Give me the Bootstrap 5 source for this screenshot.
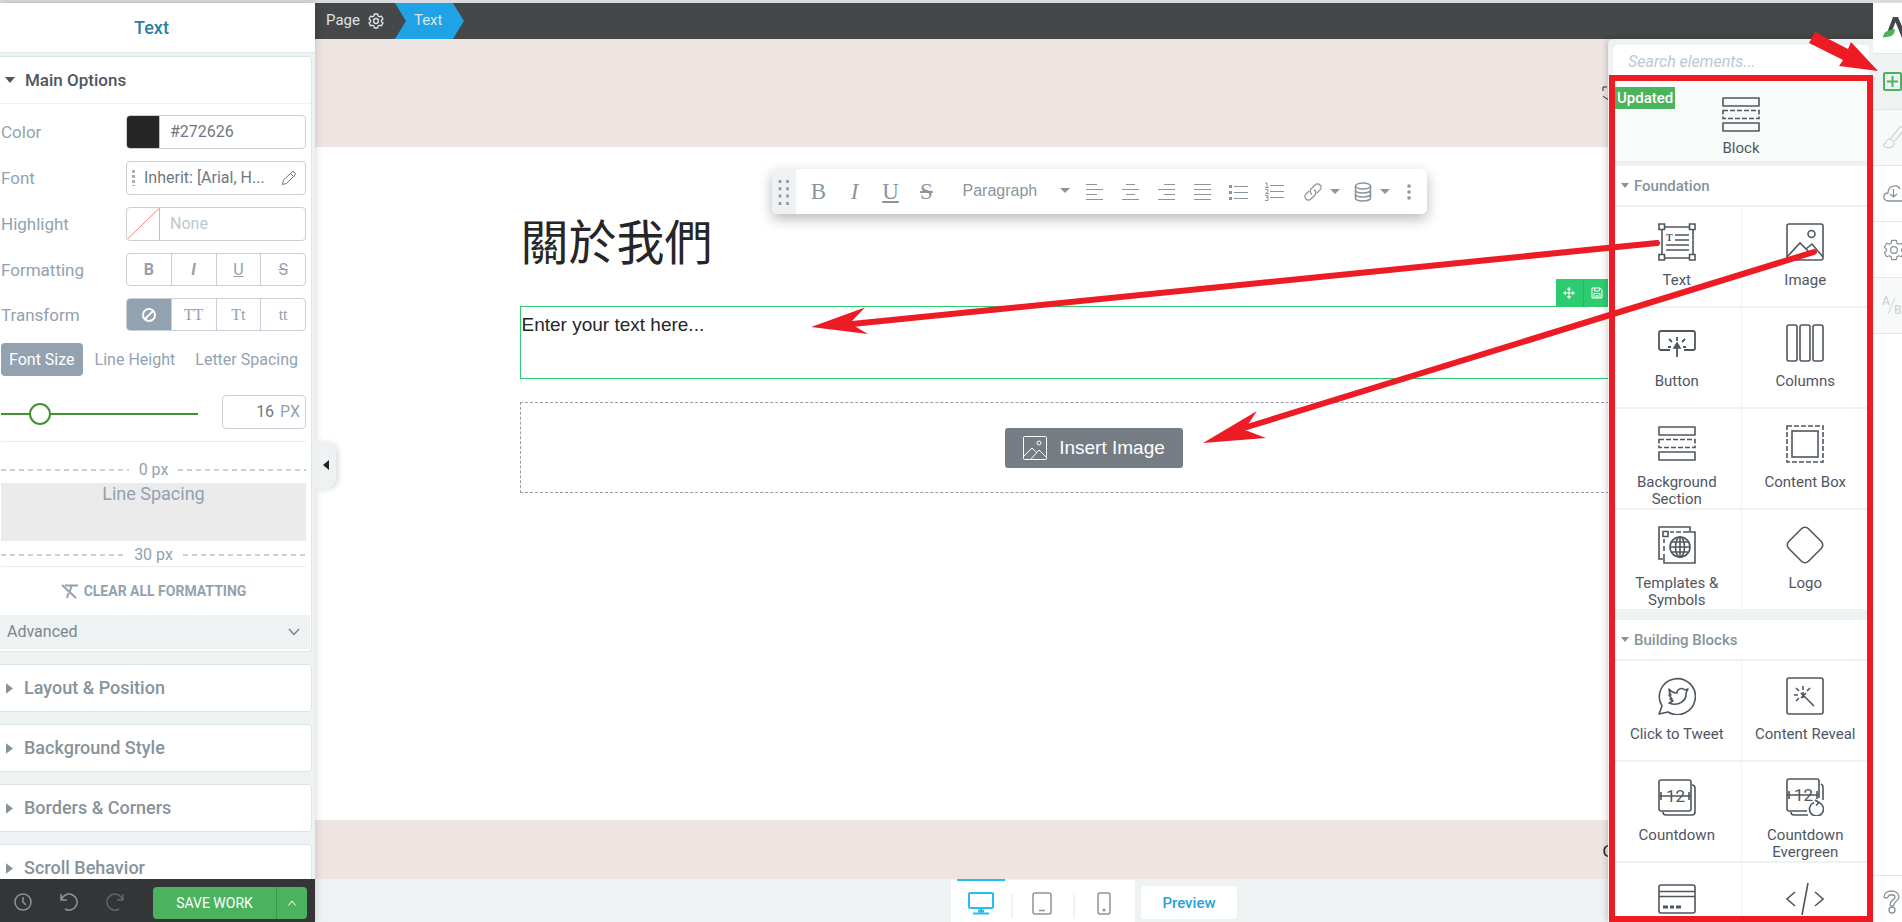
<!DOCTYPE html>
<html lang="en">
<head>
<meta charset="utf-8">
<meta name="viewport" content="width=device-width, initial-scale=1">
<title>Page editor</title>
<link rel="stylesheet" href="https://cdn.jsdelivr.net/npm/bootstrap@5.3.0/dist/css/bootstrap.min.css">
<script src="https://cdn.jsdelivr.net/npm/bootstrap@5.3.0/dist/js/bootstrap.bundle.min.js"></script>
<style>
  :root { --ui: Roboto, "Noto Sans", sans-serif; --grey: #92a2b0; --line: #dce6e8; --bg: #eef2f3; --ink: #50565f; --green: #4bb35e; }
  body { font: 400 17px/20px var(--ui); color: var(--grey); background: #fff; }
  svg { display: block; fill: none; stroke: currentColor; flex-shrink: 0; }
  button, a { color: inherit; text-decoration: none; }
  button { background: none; border: 0; padding: 0; }
  .app { border-top: 3px solid #dadce0; }

  .sidebar { width: 315px; background: var(--bg); box-shadow: 0 0 8px rgba(0,0,0,.18); z-index: 2; }
  .side-title { height: 50px; line-height: 50px; background: #fff; border-bottom: 1px solid var(--line); color: #2a7fa9; font-size: 18px; font-weight: 500; padding-right: 12px; }
  .side-body { padding: 3px 3px 0 0; gap: 12px; }
  .panel-box { background: #fff; border: 1px solid var(--line); border-left: 0; border-radius: 0 4px 4px 0; }
  .fold { height: 46px; width: 100%; gap: 11px; padding-left: 6px; font-size: 18px; font-weight: 500; color: #87939b; text-align: left; }
  .fold svg { width: 7px; height: 11px; fill: currentColor; stroke: none; }
  .fold.open { height: 47px; font-size: 17px; color: var(--ink); border-bottom: 1px solid #eef1f2; gap: 10px; padding-left: 5px; }
  .fold.open svg { width: 10px; height: 6px; }
  .options { padding: 11px 5px 0 1px; }
  .opt { margin-bottom: 12px; }
  .opt > label, .opt > .lbl { width: 125px; }
  .ctl { width: 180px; height: 34px; border: 1px solid #c9d0d7; border-radius: 4px; overflow: hidden; color: #6f7882; }
  .ctl input { border: 0; outline: 0; min-width: 0; width: 100%; padding: 0 0 0 10px; color: #6f7882; background: none; font-size: 16px; }
  .ctl input::placeholder { color: #b9c8d2; }
  .ctl.font-pick { font-size: 16px; }
  .swatch { width: 33px; border-right: 1px solid #b7c0c8; }
  .seg { width: 180px; height: 33px; border: 1px solid #c9d0d7; border-radius: 4px; overflow: hidden; }
  .seg button { flex: 1 1 0; border-right: 1px solid #c9d0d7; font-size: 16px; display: grid; place-items: center; }
  .seg button:last-child { border-right: 0; }
  .seg .on { background: var(--grey); color: #fff; }
  .slab { font-family: "Liberation Serif", serif; }
  .tabs button { height: 33px; border-radius: 4px; font-size: 16px; padding: 0 8px; }
  .tabs .on { background: var(--grey); color: #fff; }
  .size-row { margin: 19px 0 12px; }
  .size-row input[type=range] { width: 197px; height: 22px; margin-top: 4px; appearance: none; background: linear-gradient(#45902f,#45902f) center/100% 2px no-repeat; }
  .size-row input[type=range]::-webkit-slider-thumb { appearance: none; width: 22px; height: 22px; border: 2px solid #45902f; border-radius: 50%; background: #fff; }
  .px-box { width: 84px; padding-right: 5px; color: var(--grey); font-size: 16px; }
  .px-box input { text-align: right; padding: 0 6px 0 0; }
  .rule { border-top: 1px solid #e9eeef; }
  .dash { gap: 10px; line-height: 20px; font-size: 16px; padding: 4px 0 1px; }
  .dash.above { padding: 18px 0 3px; }
  .dash::before, .dash::after { content: ""; flex: 1; height: 2px; background: repeating-linear-gradient(90deg, #cbd0d3 0 5px, transparent 5px 9px); }
  .gap-box { height: 58px; background: #ebebeb; font-size: 18px; line-height: 22px; }
  .clear { height: 48px; font-size: 14px; font-weight: 700; gap: 6px; }
  .adv { width: 310px; height: 34px; background: var(--bg); color: #7b868e; margin-bottom: 2px; padding: 0 10px 0 7px; font-size: 16px; }
  .side-foot { height: 43px; background: #343537; color: #8b959b; padding: 6px 8px 3px 14px; gap: 28px; }
  .save { width: 154px; height: 32px; margin-top: 2px; background: var(--green); color: #fff; border-radius: 4px; font-size: 14px; font-weight: 700; overflow: hidden; }
  .save button + button { width: 31px; border-left: 1px solid #3f9a4f; display: grid; place-items: center; }

  .crumbs { height: 36px; background: #464749; color: #dfe3e5; font-size: 15px; line-height: 34px; }
  .crumbs .here { width: 69px; height: 36px; background: #1fa3e6; clip-path: polygon(0 0, 84% 0, 100% 50%, 84% 100%, 0 100%, 16% 50%); padding-left: 19px; }
  .crumbs .root { padding: 0 11px 0 11px; gap: 8px; }
  .canvas { min-height: 0; color: #272626; font-family: "Liberation Sans", "Noto Sans CJK TC", sans-serif; }
  .band { background: #eee5e2; }
  .band.top { height: 108px; }
  .band.foot { height: 59px; }
  .site { width: 100%; max-width: 1149px; margin: 0 auto; }
  .site h1 { font: 400 48px/60px "Noto Sans CJK TC", sans-serif; padding: 62px 0 0 1px; margin: 0 0 37px; }
  .text-el { height: 73px; border: 1px solid #2ecc71; font-size: 19px; line-height: 24px; padding: 6px 1px; }
  .text-el .tools { top: -28px; right: 0; background: #2ecc71; color: #fff; }
  .tools button { width: 28px; height: 28px; display: grid; place-items: center; border-right: 1px solid #27b463; }
  .drop-zone { margin-top: 23px; height: 91px; border: 1px dashed #949ca4; }
  .drop-zone button { width: 178px; height: 40px; background: #757c84; color: #fff; border-radius: 3px; font-size: 19px; gap: 12px; }

  .toolbar { top: 22px; left: 252px; height: 45px; background: #fff; border-radius: 5px; box-shadow: 0 5px 14px rgba(0,0,0,.28); color: #8b959d; z-index: 1; }
  .toolbar .grip { width: 24px; height: 45px; background: var(--bg); border-radius: 5px 0 0 5px; margin-right: 5px; display: grid; place-items: center; }
  .toolbar button { width: 36px; height: 45px; display: grid; place-items: center; font: 23px/24px "Liberation Serif", serif; }
  .toolbar .split { width: 32px; }
  .toolbar .arrow { width: 12px; margin-right: 6px; }
  .toolbar .style-pick { width: 132px; padding: 0 7px 2px 18px; }
  .toolbar select { appearance: none; border: 0; background: none; color: inherit; font-size: 16px; width: 90px; padding: 0; outline: 0; }

  .device-bar { height: 43px; background: var(--bg); gap: 6px; }
  .devices { width: 184px; height: 42px; background: #fff; padding-left: 6px; margin-top: 1px; color: #8b959b; }
  .devices button { flex: 1 1 0; display: grid; place-items: center; height: 43px; padding-top: 4px; position: relative; }
  .devices button + button::before { content: ""; position: absolute; left: 0; top: 14px; height: 24px; border-left: 2px solid #f0f3f4; }
  .devices .on { margin: -1px 6px 0 0; flex: 0 0 48px; border-top: 2px solid #27bdee; color: #27bdee; }
  .preview { width: 96px; height: 33px; margin-top: 7px; background: #fff; border-radius: 4px; color: #2a9fdc; font-size: 15px; font-weight: 500; }

  .elements { top: 36px; bottom: 0; right: 0; width: 265px; padding: 6px 4px 0 5px; background: var(--bg); box-shadow: -1px 0 6px rgba(0,0,0,.2); border-radius: 5px 0 0 0; font-size: 15px; color: var(--ink); z-index: 2; }
  .elements input { height: 37px; width: 100%; border: 0; border-radius: 5px 5px 0 0; background: #fff; font-size: 16px; padding: 0 15px 5px; outline: 0; }
  .elements input::placeholder { color: #bcc8cf; font-style: italic; }
  .tile { min-height: 99px; width: 100%; background: #fff; padding-top: 16px; display: flex; flex-direction: column; align-items: center; gap: 11px; line-height: 17px; }
  .tile svg { width: 38px; height: 38px; stroke-width: 1.6; }
  .tile.block { min-height: 80px; background: #f9fbfb; padding-top: 14px; gap: 6px; border-bottom: 1px solid #e4eaeb; margin-bottom: 4px; }
  .flag { top: 5px; left: 2px; background: var(--green); color: #fff; padding: 0 2px; line-height: 22px; width: 60px; font-weight: 500; }
  .group { height: 39px; width: 100%; background: #fff; margin-bottom: 2px; padding-left: 8px; gap: 5px; color: #87939b; font-weight: 500; }
  .group svg { width: 8px; height: 5px; fill: currentColor; stroke: none; }
  .toolbar .caret { width: 10px; height: 5px; fill: currentColor; stroke: none; }
  .tiles { display: grid; grid-template-columns: 1fr 1fr; gap: 2px 1px; margin-bottom: 11px; }
  .tile text { font: 400 17px Roboto, sans-serif; fill: currentColor; stroke: none; }
  .tile .serif-t { font: bold 10px "Liberation Serif", serif; }

  .rail { width: 29px; overflow: hidden; color: #87939b; }
  .rail button { height: 56px; width: 29px; padding-left: 10px; border-bottom: 1px solid #e0e7e9; display: flex; align-items: center; }
  .rail .brand { height: 51px; }
  .rail .on { background: var(--bg); color: var(--green); }
  .rail .dim { color: #d0d6d9; background: #f8faf9; }
  .rail .ab { font-size: 12px; line-height: 14px; font-weight: 500; padding-left: 9px; }
  .rail .help { border-bottom: 0; border-top: 1px solid #e0e7e9; height: 47px; padding-top: 6px; }
  .marks { left: 0; top: 0; width: 100%; height: 100%; pointer-events: none; z-index: 5; fill: #ed1c24; stroke: #ed1c24; }
  .handle { width: 21px; height: 48px; left: 315px; top: 441px; background: var(--bg); border-radius: 0 12px 12px 0; box-shadow: 3px 1px 5px rgba(0,0,0,.12); z-index: 3; color: #222; display: grid; place-items: center; }
  .solid { fill: currentColor; stroke: none; }
</style>
</head>
<body class="vh-100 overflow-hidden position-relative">
<svg width="0" height="0" class="position-absolute">
  <symbol id="right" viewBox="0 0 8 12"><path d="M0 0v12l8-6z"/></symbol>
  <symbol id="down" viewBox="0 0 12 8" preserveAspectRatio="none"><path d="M0 0h12L6 8z"/></symbol>
  <symbol id="rows" viewBox="0 0 38 38"><path d="M1 2h36v8H1zM1 27h36v8H1z" stroke-linejoin="round"/><rect x="1" y="14.5" width="36" height="8" stroke-dasharray="5 2"/></symbol>
  <symbol id="gear" viewBox="0 0 24 24"><circle cx="12" cy="12" r="3.7"/><path d="M9.500 1.500h5l.6 3 2 1.200 2.900-1 2.500 4.300-2.300 2v2l2.300 2-2.500 4.300-2.900-1-2 1.200-.6 3h-5l-.6-3-2-1.200-2.900 1L1.500 15l2.300-2v-2L1.500 9 4 4.700l2.900 1 2-1.200z" stroke-linejoin="round"/></symbol>
</svg>

<div class="app d-flex h-100">
  <aside class="sidebar d-flex flex-column flex-shrink-0">
    <div class="side-title text-center flex-shrink-0">Text</div>
    <div class="side-body d-flex flex-column flex-grow-1 overflow-hidden">
      <section class="panel-box flex-shrink-0">
        <button class="fold open d-flex align-items-center"><svg><use href="#down"/></svg>Main Options</button>
        <div class="options">
          <div class="opt d-flex align-items-center"><label for="color">Color</label>
            <div class="ctl d-flex"><span class="swatch flex-shrink-0" style="background:#272626"></span><input id="color" value="#272626"></div></div>
          <div class="opt d-flex align-items-center"><span class="lbl">Font</span>
            <button class="ctl font-pick d-flex align-items-center px-1">
              <svg width="5" height="18" class="me-2"><path d="M2.500 1v16" stroke="#a8b2ba" stroke-width="3" stroke-dasharray="3 2"/></svg>Inherit: [Arial, H...
              <svg width="16" height="16" viewBox="0 0 16 16" class="ms-auto me-1"><path d="M1.500 14.500l1-4.500 8.500-8q1-1 2 0l1 1q1 1 0 2l-8.500 8.500zM9.500 3.500l3 3"/></svg></button></div>
          <div class="opt d-flex align-items-center"><label for="hl">Highlight</label>
            <div class="ctl d-flex"><svg class="swatch" height="32" viewBox="0 0 33 32"><path d="M1 31L33 0" stroke="#f28080"/></svg><input id="hl" placeholder="None"></div></div>
          <div class="opt d-flex align-items-center"><span class="lbl">Formatting</span>
            <div class="seg d-flex"><button><b>B</b></button><button><b><i>I</i></b></button><button><u>U</u></button><button><s>S</s></button></div></div>
          <div class="opt d-flex align-items-center"><span class="lbl">Transform</span>
            <div class="seg d-flex"><button class="on" aria-label="None"><svg width="16" height="16" stroke-width="2"><circle cx="8" cy="8" r="6"/><path d="M4 12l8-8"/></svg></button><button class="slab">TT</button><button class="slab">Tt</button><button class="slab">tt</button></div></div>
          <div class="tabs d-flex justify-content-between"><button class="on">Font Size</button><button>Line Height</button><button>Letter Spacing</button></div>
          <div class="size-row d-flex justify-content-between align-items-center">
            <input type="range" aria-label="Font size" min="0" max="100" value="16">
            <div class="ctl px-box d-flex align-items-center"><input aria-label="Size" value="16"><span>PX</span></div></div>
          <div class="rule"></div>
          <div class="dash above d-flex align-items-center">0 px</div>
          <div class="gap-box text-center">Line Spacing</div>
          <div class="dash d-flex align-items-center">30 px</div>
          <div class="rule"></div>
          <button class="clear d-flex align-items-center justify-content-center w-100"><svg width="17" height="15" viewBox="0 0 17 15"><path d="M4 1.500h13M1 1l14 13M10.500 2L9 7M7.500 9L6 14" stroke-width="2"/></svg>CLEAR ALL FORMATTING</button>
        </div>
        <button class="adv d-flex align-items-center justify-content-between">Advanced<svg width="12" height="8"><path d="M1 1l5 5.500L11 1" stroke-width="1.5"/></svg></button>
      </section>
      <section class="panel-box flex-shrink-0"><button class="fold d-flex align-items-center"><svg><use href="#right"/></svg>Layout &amp; Position</button></section>
      <section class="panel-box flex-shrink-0"><button class="fold d-flex align-items-center"><svg><use href="#right"/></svg>Background Style</button></section>
      <section class="panel-box flex-shrink-0"><button class="fold d-flex align-items-center"><svg><use href="#right"/></svg>Borders &amp; Corners</button></section>
      <section class="panel-box flex-shrink-0"><button class="fold d-flex align-items-center"><svg><use href="#right"/></svg>Scroll Behavior</button></section>
    </div>
    <div class="side-foot d-flex align-items-center flex-shrink-0">
      <button aria-label="History"><svg width="18" height="18" stroke-width="1.5"><circle cx="9" cy="9" r="8"/><path d="M9 4v5l3 3"/></svg></button>
      <button aria-label="Undo"><svg width="18" height="18" stroke-width="1.5"><path d="M1 1v6h6M1.500 6.500A8 8 0 1 1 5 16"/></svg></button>
      <button aria-label="Redo" class="opacity-50"><svg width="18" height="18" stroke-width="1.5"><path d="M17 1v6h-6M16.500 6.500A8 8 0 1 0 13 16"/></svg></button>
      <div class="save d-flex ms-auto"><button class="flex-grow-1">SAVE WORK</button><button aria-label="More save options"><svg width="8" height="6"><path d="M.5 5.500L4 1l3.500 4.500"/></svg></button></div>
    </div>
  </aside>
  <button class="handle position-absolute" aria-label="Collapse"><svg class="solid" width="6" height="10"><path d="M6 0v10L0 5z"/></svg></button>

  <main class="d-flex flex-column flex-grow-1 position-relative overflow-hidden">
    <nav class="crumbs d-flex flex-shrink-0">
      <a href="#" class="root d-flex">Page<svg width="16" height="16" class="align-self-center" stroke-width="2"><use href="#gear"/></svg></a>
      <a href="#" class="here">Text</a>
    </nav>
    <div class="canvas d-flex flex-column flex-grow-1">
      <div class="band top flex-shrink-0 d-flex"><div class="site d-flex justify-content-end align-items-center"><svg width="67" height="14" viewBox="0 0 67 14"><path d="M1 5V1h4M1 10l4 3h2"/></svg></div></div>
      <div class="site flex-grow-1 position-relative">
        <div class="toolbar position-absolute d-flex align-items-center">
          <span class="grip"><svg width="12" height="26" stroke-width="2.5" stroke-dasharray="3 4.3"><path d="M2 1v25M9.500 1v25"/></svg></span>
          <button>B</button><button><i>I</i></button><button><u>U</u></button><button><s>S</s></button>
          <span class="style-pick d-flex align-items-center justify-content-between"><select aria-label="Text style"><option>Paragraph</option></select><svg class="caret"><use href="#down"/></svg></span>
          <button aria-label="Align left"><svg width="18" height="18"><path d="M0 1.500h11M0 6.500h17M0 11.500h11M0 16.500h17"/></svg></button>
          <button aria-label="Align centre"><svg width="18" height="18"><path d="M4 1.500h9M0 6.500h17M4 11.500h9M0 16.500h17"/></svg></button>
          <button aria-label="Align right"><svg width="18" height="18"><path d="M6 1.500h11M0 6.500h17M6 11.500h11M0 16.500h17"/></svg></button>
          <button aria-label="Justify"><svg width="18" height="18"><path d="M0 1.500h17M0 6.500h17M0 11.500h17M0 16.500h17"/></svg></button>
          <button aria-label="Bullets"><svg width="20" height="18"><path d="M5 3.500h14M5 9.500h14M5 15.500h14"/><path d="M0 3.500h3M0 9.500h3M0 15.500h3" stroke-width="3"/></svg></button>
          <button aria-label="Numbering"><svg width="20" height="20"><path d="M5 3.500h14M5 9.500h14M5 15.500h14M0 1h2v4M0 5.500h4M0 7.500h3v2L.5 11.500H4M0 13.500h3v5H0M1 15.500h2"/></svg></button>
          <button class="split ms-1" aria-label="Link"><svg width="20" height="20" stroke-width="1.3"><g transform="rotate(-45 10 10)"><path d="M8 6.500H3.500a3.500 3.500 0 0 0 0 7h5.500a3.500 3.500 0 0 0 3.300-4.500M12 13.500h4.500a3.500 3.500 0 0 0 0-7H11a3.500 3.500 0 0 0-3.300 4.500"/></g></svg></button>
          <button class="arrow" aria-label="Link options"><svg class="caret"><use href="#down"/></svg></button>
          <button class="split" aria-label="Dynamic data"><svg width="18" height="20" stroke-width="1.6"><ellipse cx="9" cy="4" rx="7.5" ry="3"/><path d="M1.500 4v12c0 4 15 4 15 0V4M1.500 8c0 4 15 4 15 0M1.500 12c0 4 15 4 15 0"/></svg></button>
          <button class="arrow me-0" aria-label="Data options"><svg class="caret"><use href="#down"/></svg></button>
          <button aria-label="More"><svg class="solid" width="4" height="16"><circle cx="2" cy="2" r="1.8"/><circle cx="2" cy="8" r="1.8"/><circle cx="2" cy="14" r="1.8"/></svg></button>
        </div>
        <h1>關於我們</h1>
        <div class="text-el position-relative">Enter your text here...
          <div class="tools position-absolute d-flex">
            <button aria-label="Move"><svg width="12" height="12"><path d="M6 2v8M2 6h8"/><path d="M4.500 2.500L6 .5l1.500 2zM4.500 9.500l1.500 2 1.500-2zM2.500 4.500L.5 6l2 1.500zM9.500 4.500l2 1.500-2 1.500z"/></svg></button>
            <button aria-label="Save"><svg width="12" height="12"><path d="M1 1h8l2 2v8H1zM3.500 1v3h5V1M3 11V6.500h6V11M5 8.500h2v2H5z"/></svg></button>
            <button aria-label="Copy"></button><button aria-label="Delete"></button>
          </div>
        </div>
        <div class="drop-zone d-flex align-items-center justify-content-center">
          <button class="d-flex align-items-center justify-content-center"><svg width="24" height="24"><rect x=".5" y=".5" width="23" height="23" rx="1"/><circle cx="16" cy="7" r="2"/><path d="M1 20l8-8 5 5M8 23l8-9 7 7"/></svg>Insert Image</button>
        </div>
      </div>
      <div class="band foot flex-shrink-0"><div class="site d-flex justify-content-end align-items-center h-100 pt-1"><span style="width:66px">C</span></div></div>
    </div>
    <div class="device-bar d-flex justify-content-center flex-shrink-0">
      <div class="devices d-flex">
        <button class="on" aria-label="Desktop"><svg width="26" height="23" stroke-width="2"><rect x="1" y="1" width="24" height="15" rx="1"/><path d="M13 16v5M5 21.500h16"/><path d="M10 19h6" stroke-width="3"/></svg></button>
        <button aria-label="Tablet"><svg width="20" height="23" stroke-width="1.5"><rect x="1" y="1" width="18" height="21" rx="2"/><path d="M7 18.500h6"/></svg></button>
        <button aria-label="Phone"><svg width="14" height="23" stroke-width="1.5"><rect x="1" y="1" width="12" height="21" rx="2"/><circle cx="7" cy="18" r=".8"/></svg></button>
      </div>
      <button class="preview">Preview</button>
    </div>

    <aside class="elements position-absolute overflow-hidden">
      <input type="search" aria-label="Search elements" placeholder="Search elements...">
      <div class="list">
        <button class="tile block position-relative"><span class="flag position-absolute">Updated</span><svg><use href="#rows"/></svg>Block</button>
        <button class="group d-flex align-items-center"><svg><use href="#down"/></svg>Foundation</button>
        <div class="tiles">
          <button class="tile"><svg viewBox="0 0 38 38"><path d="M7 4h24M7 35h24M4 7v24M35 7v24M1 1h5.500v5.500H1zM31.500 1H37v5.500h-5.500zM1 31.500h5.500V37H1zM31.500 31.500H37V37h-5.500zM17 12h14M17 17h14M8 22h23M8 27h23"/><text class="serif-t" x="8" y="18">T</text></svg>Text</button>
          <button class="tile"><svg viewBox="0 0 38 38"><rect x="1" y="1" width="36" height="36" rx="2"/><circle cx="25.5" cy="11" r="3.5"/><path d="M1 34l13-14 9 9M20 26l6-5 11 13"/></svg>Image</button>
          <button class="tile"><svg viewBox="0 0 38 38"><path d="M12 26H3q-2 0-2-2V9q0-2 2-2h32q2 0 2 2v15q0 2-2 2h-9M19 33V22M19 17v-4M14 18l-3-3M24 18l3-3M13 23h-3M25 23h3" stroke-width="1.8"/><path d="M16 24l3-5 3 5z" fill="currentColor"/></svg>Button</button>
          <button class="tile"><svg viewBox="0 0 38 38"><rect x="1" y="1" width="10" height="36" rx="2"/><rect x="14" y="1" width="10" height="36" rx="2"/><rect x="27" y="1" width="10" height="36" rx="2"/></svg>Columns</button>
          <button class="tile"><svg><use href="#rows"/></svg><span>Background<br>Section</span></button>
          <button class="tile"><svg viewBox="0 0 38 38"><rect x="1" y="1" width="36" height="36" stroke-dasharray="5 2"/><rect x="6" y="6" width="26" height="26"/></svg>Content Box</button>
          <button class="tile"><svg viewBox="0 0 38 38"><path d="M5 33H1V1h31v5h5v31H6V28M5 5.500h5v5H5zM12 6h4M18 6h5M25 6h6M6 13v4M6 20v5"/><circle cx="22" cy="21" r="10"/><ellipse cx="22" cy="21" rx="4.5" ry="10"/><path d="M22 11v20M12 21h20M13.500 16h17M13.500 26h17"/></svg><span>Templates &amp;<br>Symbols</span></button>
          <button class="tile"><svg viewBox="0 0 38 38"><rect x="5" y="5" width="28" height="28" rx="5" transform="rotate(45 19 19)"/></svg>Logo</button>
        </div>
        <button class="group d-flex align-items-center"><svg><use href="#down"/></svg>Building Blocks</button>
        <div class="tiles mb-0">
          <button class="tile"><svg viewBox="0 0 38 38"><path d="M1 37l3-8A18 18 0 1 1 10 35z" stroke-linejoin="round"/><path d="M11 12c3 4 6 4 8 4 0-4 5-6 8-3l3-1-2 4c1 7-7 14-17 10l4-2-3-2h2l-3-4h2c-2-2-2-4-2-6z" stroke-linejoin="round"/></svg>Click to Tweet</button>
          <button class="tile"><svg viewBox="0 0 38 38"><rect x="1" y="1" width="36" height="36" rx="2"/><path d="M17 18l11 11M17 9v4M10 11l3 3M24 11l-3 3M8 18h4M10 24l3-3M15 16l5 5M20 16l-5 5M17 15v6"/></svg>Content Reveal</button>
          <button class="tile"><svg viewBox="0 0 38 38"><rect x="1" y="2" width="32" height="31" rx="2"/><path d="M1 18h32M3 14v8M31 14v8M34 7q3 0 3 3v24q0 3-3 3H8q-3 0-3-3"/><text x="8" y="24">12</text></svg>Countdown</button>
          <button class="tile"><svg viewBox="0 0 38 38"><path d="M21 33H3q-2 0-2-2V3q0-2 2-2h28q2 0 2 2v17M1 17h32M3 13v8M31 13v8M35 6q2 1 2 3v13M5 34q0 3 3 3h14M33 24.500a7 7 0 1 1-5 0M29 22l4 2.500-3 3"/><text x="8" y="23">12</text></svg><span>Countdown<br>Evergreen</span></button>
          <button class="tile" aria-label="Credit card"><svg viewBox="0 0 38 38"><rect x="1" y="6" width="36" height="28" rx="2"/><path d="M1 12.500h36M1 17.500h36"/><path d="M5 28h5M12 28h4M18 28h5" stroke-width="3"/></svg></button>
          <button class="tile" aria-label="Custom HTML"><svg viewBox="0 0 38 38"><path d="M9 13l-8 7 8 7M29 13l8 7-8 7M22 4l-6 32"/></svg></button>
        </div>
      </div>
    </aside>
  </main>

  <aside class="rail d-flex flex-column flex-shrink-0">
    <button class="brand" aria-label="Home"><svg width="30" height="22" viewBox="0 0 30 22" stroke="none"><path class="solid" d="M4 16L10 0h5l9 21h-5L12.500 5 9 14z" style="fill:#444648"/><path class="solid" d="M0 21C0 15 4 13 12 12c0 7-5 8-10 8z" style="fill:#4bb35e"/></svg></button>
    <button class="on" aria-label="Add element"><svg width="19" height="19" stroke-width="2"><rect x="1" y="1" width="17" height="17" rx="1"/><path d="M9.500 4v11M4 9.500h11"/></svg></button>
    <button class="dim" aria-label="Styles"><svg width="24" height="24" stroke-width="1.3"><path d="M0 18c3 1 3-2 4-4 4-3 9 2 6 6-3 3-9 2-10-2zM8 12l9-11h6L12 15"/></svg></button>
    <button aria-label="Templates"><svg width="26" height="18" stroke-width="1.3"><path d="M20 16H5C-1 15 0 8 5 8 5 0 15-1 17 4M19 4c4-1 6 1 7 4M10.500 4v8M7 9l3.500 3L14 9"/></svg></button>
    <button aria-label="Settings"><svg width="22" height="22" stroke-width="1.3"><use href="#gear"/></svg></button>
    <button class="dim ab" aria-label="A/B test"><span class="align-self-start pt-3">A</span><svg width="4" height="18" overflow="visible"><path d="M-2 17L5 1"/></svg><span class="align-self-end pb-3">B</span></button>
    <button class="help mt-auto" aria-label="Help"><svg width="18" height="24" viewBox="0 0 18 24" stroke-width="1.3"><path d="M1 7C1-1 16-1 16 7c0 4-5 4-5 8q-3 2-4 0c0-5 5-5 5-8s-6-3-7 0q-2 2-4 0z"/><circle cx="9" cy="20" r="3"/></svg></button>
  </aside>
</div>

<svg class="marks position-absolute" viewBox="0 0 1902 922" preserveAspectRatio="none">
  <rect x="1612" y="78" width="258" height="841" fill="none" stroke-width="6"/>
  <path d="M852 324L1657 243M1247 427L1814 252" stroke-width="6" stroke-linecap="round"/>
  <path stroke="none" d="M811 327L865 307.500 851 322 856 327 868 334zM1203 443L1257 411 1249 423 1245 430 1266 438zM1815 32L1848 49 1851 42 1878 71 1839 66 1843 60 1809 43z"/>
</svg>
</body>
</html>
